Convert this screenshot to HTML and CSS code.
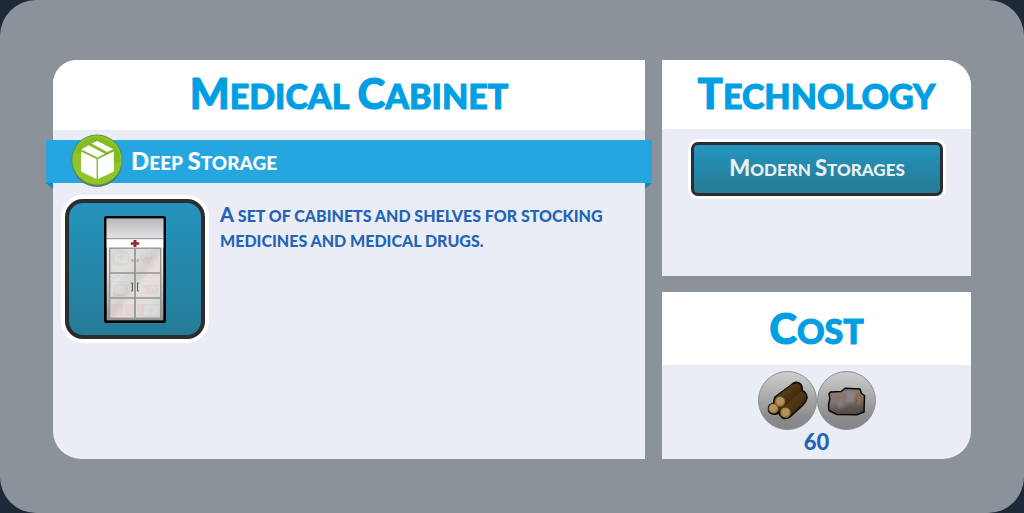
FILE: index.html
```html
<!DOCTYPE html>
<html lang="en">
<head>
<meta charset="utf-8">
<meta name="viewport" content="width=device-width, initial-scale=1">
<title>Medical Cabinet</title>
<link rel="stylesheet" href="styles.css">
</head>
<body>
<main class="shell">
  <section class="panel panel-main">
    <h1 class="panel-title caps"><span class="word">Medical</span> <span class="word">Cabinet</span></h1>
    <div class="ribbon">
      <svg class="badge" viewBox="0 0 52 56" aria-hidden="true">
        <circle cx="26" cy="28" r="25" fill="#5b7768"/>
        <circle cx="26" cy="26" r="25.500" fill="#5c8a3c"/>
        <circle cx="26" cy="26" r="24.700" fill="#8fc42e"/>
        <path d="M3.500 17A24.700 24.700 0 0 1 50 28Q25 32 8 19Z" fill="#82bb22"/>
        <path d="M10 17.500L25.500 25v20L10 37.500zM27 25l15.800-7.500v20L27 45z" fill="#fff"/>
        <path d="M10.300 15.500L17.500 11.300 34 19.700 26.500 23.500zM20.500 9.500L26.500 7 42.300 15.300 36 18z" fill="#fff"/>
      </svg>
      <h2 class="ribbon-text caps"><span class="word">Deep</span> <span class="word">Storage</span></h2>
    </div>
    <div class="details">
      <div class="tile">
        <svg class="cabinet" viewBox="0 0 62 107" role="img" aria-label="Medical cabinet">
          <defs>
            <linearGradient id="top" x2="0" y2="1"><stop stop-color="#b9b8ba"/><stop offset="1" stop-color="#e4e3e5"/></linearGradient>
            <linearGradient id="side" x2="0" y2="1"><stop stop-color="#fff"/><stop offset=".5" stop-color="#e2e2e2"/><stop offset="1" stop-color="#949494"/></linearGradient>
            <linearGradient id="glass" x2="1" y2="1"><stop stop-color="#d6d9d6"/><stop offset=".3" stop-color="#e2dedb"/><stop offset=".48" stop-color="#d0d2d1"/><stop offset=".58" stop-color="#eadfdd"/><stop offset="1" stop-color="#d5d9d7"/></linearGradient>
          </defs>
          <rect width="62" height="107" rx="2.500" fill="#050505"/>
          <rect x="2.700" y="2.700" width="56.600" height="101.600" fill="url(#side)"/>
          <rect x="2.700" y="2.700" width="56.600" height="20" fill="url(#top)"/>
          <rect x="2.700" y="22.700" width="56.600" height="9" fill="#fff"/>
          <path d="M2.700 22.700h56.600" stroke="#888"/>
          <path d="M29.500 24h3v2.200h2.700v2.600h-2.700v2.200h-3v-2.200h-2.700v-2.600h2.700z" fill="#96262d"/>
          <rect x="5.700" y="32.200" width="51" height="70" fill="url(#glass)" stroke="#969696" stroke-width="1.400"/>
          <g fill="none" stroke="#bcb9b8" stroke-width=".8" opacity=".4">
            <rect x="9.500" y="36" width="15" height="12" rx="2"/><path d="M17 38v6M14 41h6M14 35h6"/>
            <path d="M37 37v7l3-5 3 5v-7M47 36v8M50 36v8M53 36v8"/>
            <path d="M7 60l4 3 3-4 4 5 4-4 4 4M35 58l3 4 4-4 4 4 5-4 4 3"/>
            <rect x="10" y="69" width="13" height="10" rx="2"/><path d="M13 66h8M37 70h16v7H37"/>
            <rect x="39" y="89" width="16" height="11"/><path d="M47 91v6M44 94h6"/>
          </g>
          <g fill="#dc8c83" opacity=".12"><path d="M8 88h12v12H8zM21 88h9v12h-9zM33 88h6v12h-6zM34 44l16-5-5 9zM8 76l13 3-13 3zM39 69l15 6-12 1z"/></g>
          <path d="M28 42l2 2-1 2-2-2zM33 42l2 2-2 2z" fill="#a1ae70" opacity=".6"/>
          <path d="M27 45h8" stroke="#d48e91" opacity=".6"/>
          <path d="M31 32v70M6 57h51M6 82h51" stroke="#939393" stroke-width="1.700"/>
          <path d="M27.200 67h1.200v8h-1.200M34.800 67h-1.200v8h1.200" fill="none" stroke="#3c4142" stroke-width=".9"/>
        </svg>
      </div>
      <p class="description">A set of cabinets and shelves for stocking medicines and medical drugs.</p>
    </div>
  </section>

  <div class="side">
    <section class="panel panel-tech">
      <h2 class="panel-title caps"><span class="word">Technology</span></h2>
      <div class="tech-body">
        <button class="tech caps" type="button"><span class="word">Modern</span> <span class="word">Storages</span></button>
      </div>
    </section>
    <section class="panel panel-cost">
      <h2 class="panel-title caps"><span class="word">Cost</span></h2>
      <div class="cost-body">
        <div class="materials">
          <svg class="material" viewBox="0 0 59 59" role="img" aria-label="Wood">
            <defs>
              <linearGradient id="disc" x2="0" y2="1"><stop stop-color="#cfcfcf"/><stop offset=".8" stop-color="#8b8b8b"/><stop offset="1" stop-color="#858585"/></linearGradient>
              <linearGradient id="bark" x2=".8" y2=".7"><stop stop-color="#6a4c20"/><stop offset="1" stop-color="#3e290b"/></linearGradient>
            </defs>
            <circle cx="29.500" cy="29.500" r="29" fill="url(#disc)" stroke="#8d8d91"/>
            <path d="M17 26L35 12.500Q39 10 42.500 13Q45 16 44 19.500Q49 21.500 49 27Q48 31 45 34L32.500 45.500Q28 49 24 46.500Q21 44 21 41.500Q19 44 15 43Q10 42 10.500 37Q11 33 15.500 32.500Q15.500 29 17 26Z" fill="#452e0e" stroke="#080704" stroke-width="1.500"/>
            <path d="M18 26L35.500 13Q40 11.500 43 16L42 20 26.500 33.500 25.500 27z" fill="url(#bark)"/>
            <path d="M25.500 36.500L43.500 20.500Q48 22 48 27L32 44z" fill="url(#bark)"/>
            <g fill="#9c7c4a" stroke="#4a3314" stroke-width=".5"><circle cx="15.500" cy="37.500" r="5"/><circle cx="22" cy="30.500" r="5.200"/><circle cx="27.500" cy="41.500" r="5.300"/></g>
            <g fill="#b5935c"><circle cx="15.300" cy="37" r="3.600"/><circle cx="22.200" cy="30" r="3.700"/><circle cx="27.500" cy="41" r="3.700"/></g>
          </svg>
          <svg class="material" viewBox="0 0 59 59" role="img" aria-label="Stone">
            <defs>
              <linearGradient id="rock" x2=".2" y2="1"><stop stop-color="#8c7d77"/><stop offset=".55" stop-color="#7c7370"/><stop offset="1" stop-color="#4e4846"/></linearGradient>
              <filter id="soft"><feGaussianBlur stdDeviation="1.500"/></filter>
              <filter id="rust"><feGaussianBlur stdDeviation=".7"/></filter>
            </defs>
            <circle cx="29.500" cy="29.500" r="29" fill="url(#disc)" stroke="#8d8d91"/>
            <path d="M13.500 21L24 20.500 28.500 17.200 43 18 44.500 22.500 47.500 24.500 47 41 40 43.800 20 43.500 12 39.500 11.500 34 12.800 28 12 23z" fill="url(#rock)"/>
            <g filter="url(#soft)" opacity=".6"><path d="M29 20l10 2-2 9-8 1zM20 31l5-3 3 6-6 4z" fill="#978b86"/><path d="M15 37l13 1 4-3 12 4-5 3H21zM40 22l4 5-3 7-4-4z" fill="#61524c"/></g>
            <path d="M20 24l4-1-1 5-3 1zM39 21l3 1 2 7-2 5-2-2z" fill="#a66a40" opacity=".7" filter="url(#rust)"/>
            <path d="M13.500 21L24 20.500 28.500 17.200 43 18 44.500 22.500 47.500 24.500 47 41 40 43.800 20 43.500 12 39.500 11.500 34 12.800 28 12 23z" fill="none" stroke="#070707" stroke-width="1.500" stroke-linejoin="round"/>
          </svg>
        </div>
        <p class="amount">60</p>
      </div>
    </section>
  </div>
</main>
</body>
</html>
```
FILE: styles.css
```css
* { box-sizing: border-box; }

body {
  margin: 0;
  background: #1c2938;
  font-family: Lato, "Open Sans", sans-serif;
  font-weight: 900;
}

h1, h2, p { margin: 0; }

.shell {
  min-height: 100vh;
  padding: 60px 53px 54px;
  display: grid;
  grid-template-columns: minmax(0, 592fr) minmax(0, 309fr);
  gap: 17px;
  background: #8b9299;
  border-radius: 36px;
}

.panel {
  display: flex;
  flex-direction: column;
  background: #eaedf6;
}

.panel-main { border-radius: 24px 0 0 28px; }
.panel-tech { border-radius: 0 26px 0 0; }
.panel-cost { border-radius: 0 0 28px 0; }

.side {
  display: grid;
  grid-template-rows: 1fr auto;
  gap: 16px;
}

.caps {
  text-transform: uppercase;
  font-weight: 900;
}

.word { display: inline-block; }

.panel-title {
  height: 69px;
  border-radius: inherit;
  border-bottom-left-radius: 0;
  background: #fff;
  color: #009fe3;
  font-size: 34px;
  line-height: 67px;
  text-align: center;
  -webkit-text-stroke: 1px #009fe3;
}

.panel-title .word::first-letter { font-size: 42px; }

.panel-main .panel-title { height: 70px; }

.panel-cost .panel-title {
  height: 73px;
  line-height: 73px;
  border-radius: 0;
}

.ribbon {
  position: relative;
  height: 43px;
  margin: 10px -7px 0;
  padding-left: 25px;
  display: flex;
  align-items: center;
  gap: 8px;
  background: #25a6e1;
  color: #fff;
}

.ribbon::before,
.ribbon::after {
  content: "";
  position: absolute;
  top: 100%;
  width: 7px;
  height: 6px;
  background: #1687b8;
}

.ribbon::before { left: 0; clip-path: polygon(0 0, 100% 0, 100% 100%); }
.ribbon::after { right: 0; clip-path: polygon(0 0, 100% 0, 0 100%); }

.badge {
  width: 52px;
  height: 56px;
  flex: none;
}

.ribbon-text {
  font-size: 19px;
  line-height: 43px;
}

.ribbon-text .word::first-letter { font-size: 24px; }

.details {
  display: flex;
  gap: 15px;
  padding: 16px 20px 16px 12px;
}

.tile {
  flex: none;
  width: 140px;
  height: 140px;
  display: flex;
  align-items: center;
  justify-content: center;
  border: 4px solid #2c2c2e;
  border-radius: 18px;
  background: linear-gradient(#2594bf, #247b95);
  background-origin: border-box;
  box-shadow: 0 0 0 4px #fff;
}

.cabinet {
  width: 62px;
  height: 107px;
}

.description {
  padding-top: 3px;
  color: #2364b8;
  font-size: 16px;
  line-height: 25px;
  text-transform: uppercase;
}

.description::first-letter { font-size: 20px; }

.tech-body { padding: 13px 28px 16px 29px; }

.tech {
  display: block;
  width: 100%;
  height: 54px;
  padding: 0 0 4px;
  border: 3px solid #2c2c2e;
  border-radius: 7px;
  background: linear-gradient(#2594bf, #247b95);
  box-shadow: 0 0 0 3px #fff;
  color: #ebeeee;
  font-family: inherit;
  font-size: 17px;
}

.tech .word::first-letter { font-size: 22px; }

.cost-body {
  padding: 6px 0 5px;
  text-align: center;
}

.materials {
  display: flex;
  justify-content: center;
}

.material {
  width: 59px;
  height: 59px;
}

.amount {
  color: #2364b8;
  font-size: 22px;
  line-height: 24px;
}
```
